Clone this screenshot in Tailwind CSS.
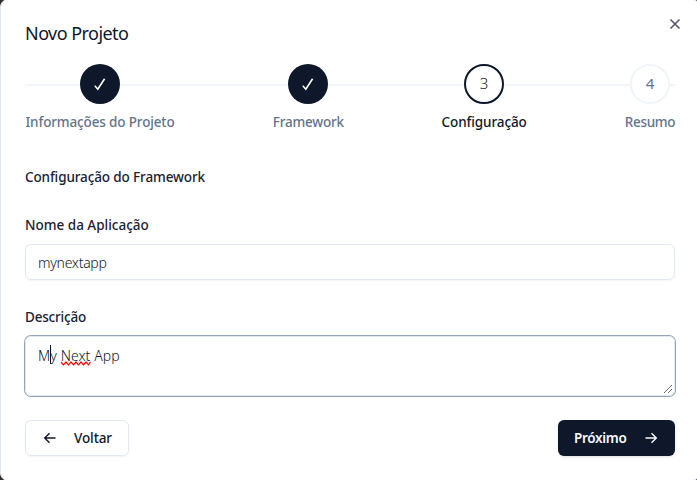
<!DOCTYPE html>
<html lang="pt-BR">
<head>
<meta charset="utf-8">
<title>Novo Projeto</title>
<script src="https://cdn.jsdelivr.net/npm/@tailwindcss/browser@4"></script>
</head>
<body class="h-[480px] overflow-hidden bg-[#303033] font-['Noto_Sans',sans-serif] text-sm text-[#0f172a]">
<main class="relative -mt-px h-[482px] w-[700px] rounded-lg border border-[#e2e8f0] bg-white px-6 pt-6">
  <button class="absolute top-4 right-4 size-4 text-[#4b5362]" aria-label="Fechar">
    <svg class="size-4" viewBox="0 0 16 16" fill="none" stroke="currentColor" stroke-width="1.5"><path d="M3.5 3.5l9 9M12.5 3.5l-9 9"/></svg>
  </button>
  <h1 class="h-[18px] text-[18px] leading-[18px] tracking-[-0.55px]">Novo Projeto</h1>
  <section class="relative mt-[22px] flex h-[68px] justify-between font-medium text-[#64748b]">
    <div class="absolute top-5 left-0 h-0.5 w-full bg-[#f1f5f9]"></div>
    <div class="relative flex w-[150px] flex-col items-center">
      <div class="flex size-10 items-center justify-center rounded-full bg-[#0f172a] text-white"><svg class="size-4" viewBox="0 0 16 16" fill="none" stroke="currentColor" stroke-width="1.6"><path d="M2.8 9.8L5.8 13.2 12.6 2.8"/></svg></div>
      <span class="mt-2 whitespace-nowrap text-[13.5px] leading-5 tracking-[-0.14px]">Informações do Projeto</span>
    </div>
    <div class="relative flex w-[72px] flex-col items-center">
      <div class="flex size-10 items-center justify-center rounded-full bg-[#0f172a] text-white"><svg class="size-4" viewBox="0 0 16 16" fill="none" stroke="currentColor" stroke-width="1.6"><path d="M2.8 9.8L5.8 13.2 12.6 2.8"/></svg></div>
      <span class="mt-2 whitespace-nowrap text-[13.5px] leading-5 tracking-[-0.2px]">Framework</span>
    </div>
    <div class="relative mr-px flex w-[85px] flex-col items-center text-[#0f172a]">
      <div class="flex size-10 items-center justify-center rounded-full border-2 border-[#0f172a] bg-white text-[15px] font-light">3</div>
      <span class="mt-2 whitespace-nowrap text-[13.5px] leading-5 tracking-[-0.1px]">Configuração</span>
    </div>
    <div class="relative flex w-[50px] flex-col items-center">
      <div class="flex size-10 items-center justify-center rounded-full border-2 border-[#f1f5f9] bg-white text-[15px] font-normal">4</div>
      <span class="mt-2 whitespace-nowrap text-[13.5px] leading-5 tracking-[-0.35px]">Resumo</span>
    </div>
  </section>
  <h2 class="mt-[35px] leading-5 font-medium text-[#1a2233]"><span class="text-[13.5px] tracking-[-0.12px]">Configuração do Framework</span></h2>
  <label class="mt-7 block leading-5 font-medium text-[#1a2233]"><span class="text-[13.5px]">Nome da Aplicação</span></label>
  <div class="mt-[9px] flex h-9 items-center rounded-md border border-[#e2e8f0] px-3 text-[14px] font-light tracking-[-0.26px] shadow-xs"><span class="relative top-px">mynextapp</span></div>
  <label class="mt-[27px] block leading-5 font-medium text-[#1a2233]"><span class="text-[13.5px] tracking-[-0.2px]">Descrição</span></label>
  <div class="relative mt-[9px] h-[60px] rounded-md border border-[#e2e8f0] px-3 pt-[9px] text-[14px] leading-5 font-light tracking-[0.08px] ring-1 ring-[#94a3b8]">
    <span>My Next App</span>
    <i class="absolute top-2 left-6 h-[19px] w-px bg-[#0f172a]"></i>
    <svg class="absolute top-[24px] left-[35px] h-[5px] w-[30px]" viewBox="0 0 30 5" fill="none" stroke="#ff0000" stroke-width="1.2"><path d="M0 1l2.5 2.8L5 1l2.5 2.8L10 1l2.5 2.8L15 1l2.5 2.8L20 1l2.5 2.8L25 1l2.5 2.8L29.5 1"/></svg>
    <svg class="absolute right-0.5 bottom-0.5 size-2" viewBox="0 0 8 8" stroke="#42464d" stroke-width=".8"><path d="M0 8L8 0M4 8l4-4"/></svg>
  </div>
  <footer class="mt-6 flex justify-between font-medium">
    <button class="flex h-9 w-[104px] items-center rounded-md border border-[#e2e8f0] pl-4 shadow-xs">
      <svg class="size-4" viewBox="0 0 16 16" fill="none" stroke="currentColor" stroke-width="1.4"><path d="M13.5 8h-11M7.5 3.2L2.7 8l4.8 4.8"/></svg>
      <span class="relative top-px ml-4 text-[13.5px] tracking-[-0.1px]">Voltar</span>
    </button>
    <button class="flex h-9 w-[117px] items-center justify-between rounded-md bg-[#0f172a] px-4 text-[#f8fafc] shadow-sm">
      <span class="relative top-px text-[13.5px] font-semibold tracking-[-0.3px]">Próximo</span>
      <svg class="size-4" viewBox="0 0 16 16" fill="none" stroke="currentColor" stroke-width="1.4"><path d="M2.5 8h11M8.5 3.2L13.3 8l-4.8 4.8"/></svg>
    </button>
  </footer>
</main>
</body>
</html>
